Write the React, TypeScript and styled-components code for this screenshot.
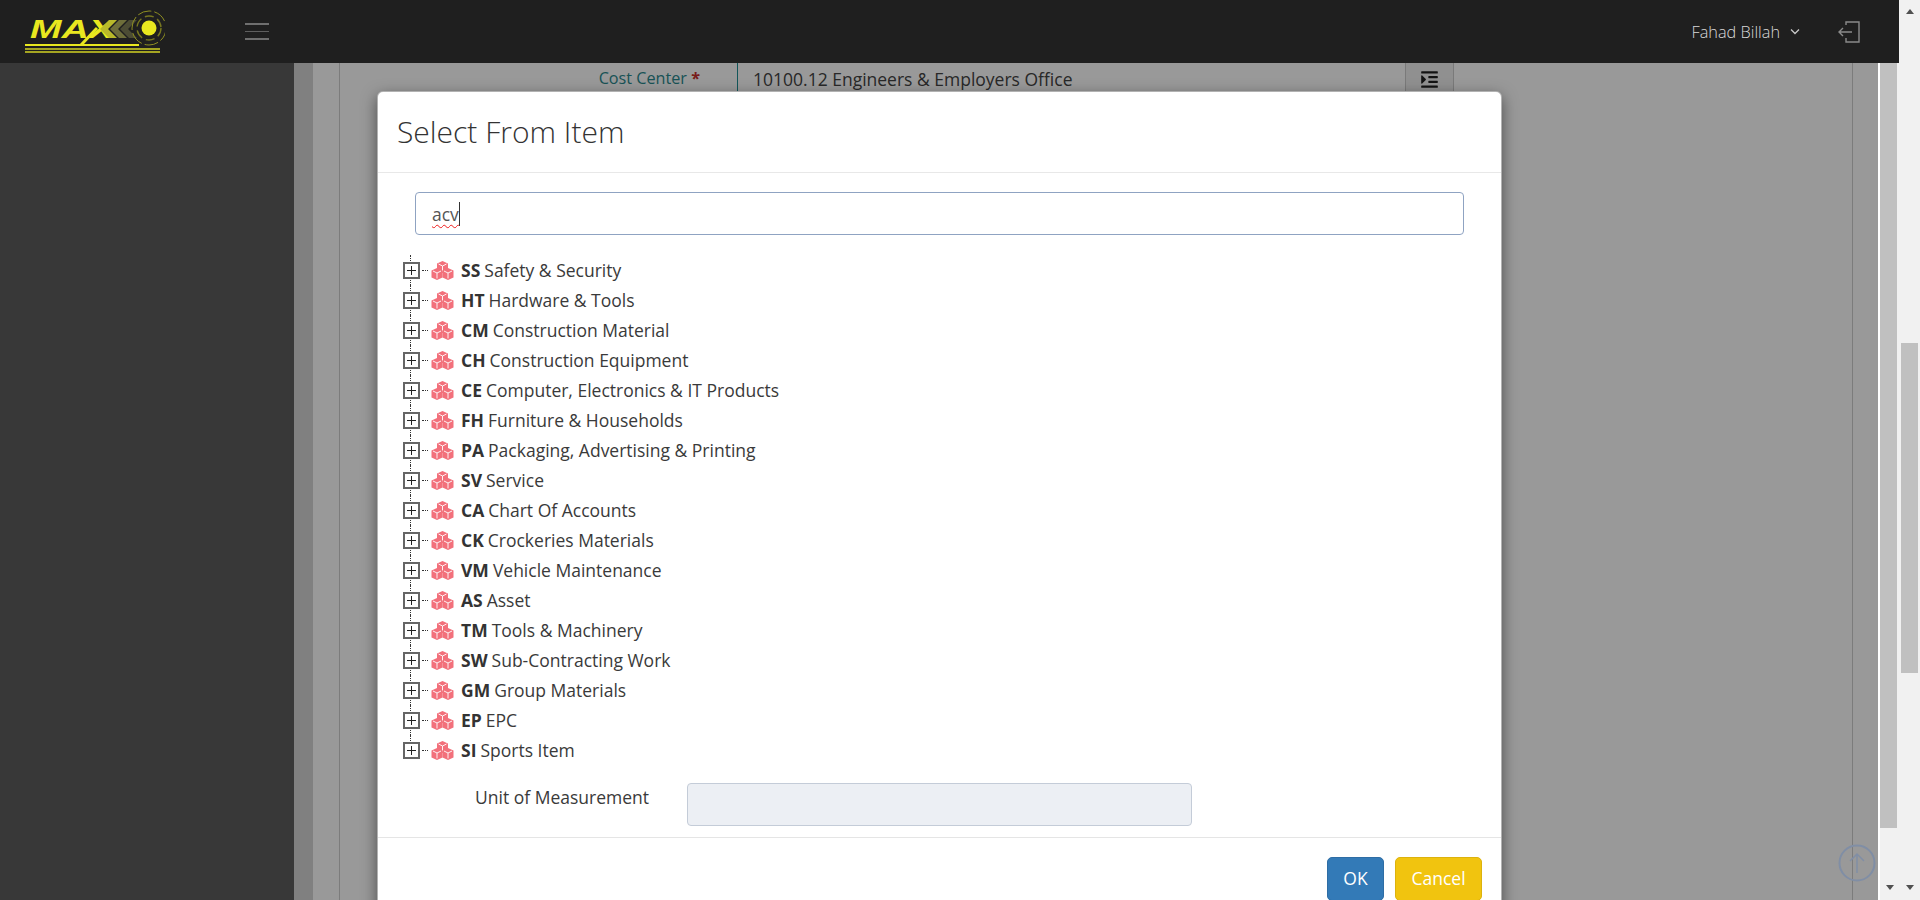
import styled, { createGlobalStyle } from "styled-components";
import { FaIndent } from "react-icons/fa";

const Global = createGlobalStyle`
  html, body { margin: 0; padding: 0; overflow: hidden; background: #f1f1f1; }
  * { box-sizing: border-box; }
  body { font-family: "Open Sans", "Liberation Sans", sans-serif; color: #333; }
`;

const Shell = styled.div`
  width: 1920px;
  height: 900px;
  display: flex;
  overflow: hidden;
`;
const Main = styled.div`
  width: 1899px;
  display: flex;
  flex-direction: column;
`;
const Header = styled.header`
  height: 63px;
  flex: none;
  background: #1f1f1f;
  display: flex;
  align-items: center;
  padding: 0 39px 0 25px;
`;
const Burger = styled.div`
  margin-left: 80px;
  width: 24px;
  display: flex;
  flex-direction: column;
  gap: 5px;
  margin-top: -1px;
  span { height: 2px; background: #6f6f6f; }
  span:nth-child(2) { height: 1px; margin-top: 1px; margin-bottom: 1px; background: #5f5f5f; }
`;
const Spacer = styled.div`
  flex: 1;
`;
const UserName = styled.div`
  font-size: 16.3px;
  font-weight: 300;
  color: #d8d8d8;
  margin-right: 10px;
`;
const LogoutWrap = styled.div`
  margin-left: 38px;
  display: flex;
`;
const Body = styled.div`
  flex: 1;
  display: flex;
  min-height: 0;
`;
const Sidebar = styled.aside`
  width: 294px;
  flex: none;
  background: #383838;
`;
const Content = styled.main`
  flex: 1;
  position: relative;
  overflow: hidden;
  background: #fff;
  padding-right: 2px;
`;
const Outer = styled.div`
  height: 100%;
  background: #fff;
  border-left: 19px solid #d6d6d6;
  padding-left: 26px;
  padding-right: 25px;
`;
const Panel = styled.div`
  height: 100%;
  border-left: 1px solid #cfcfcf;
  border-right: 1px solid #cfcfcf;
`;
const CostRow = styled.div`
  display: flex;
  height: 60px;
`;
const CostLabel = styled.div`
  width: 397px;
  text-align: right;
  padding: 4px 37px 0 0;
  font-size: 16.2px;
  color: #2b8a8f;
  em { color: #c9302c; font-style: normal; font-weight: 700; }
`;
const CostField = styled.div`
  width: 668px;
  border-left: 1px solid #1f8f97;
  padding: 4px 15px;
  font-size: 17.5px;
  color: #444;
`;
const CostBtn = styled.div`
  width: 49px;
  background: #f0f0f0;
  border-left: 1px solid #ccc;
  border-right: 1px solid #ccc;
  display: flex;
  justify-content: center;
  padding-top: 7px;
  color: #222;
`;
const Backdrop = styled.div`
  position: absolute;
  inset: 0 2px 0 0;
  background: rgba(0, 0, 0, 0.4);
`;
const Modal = styled.section`
  position: absolute;
  left: 83px;
  top: 28px;
  width: 1125px;
  height: 860px;
  background: #fff;
  border-radius: 6px;
  border: 1px solid rgba(0, 0, 0, 0.3);
  box-shadow: 0 5px 15px rgba(0, 0, 0, 0.5);
  display: flex;
  flex-direction: column;
`;
const ModalHead = styled.div`
  height: 81px;
  flex: none;
  border-bottom: 1px solid #e8e8e8;
  padding: 20px 19px 0;
`;
const Title = styled.h4`
  margin: 0;
  font-size: 30px;
  line-height: 40px;
  font-weight: 300;
  color: #333;
`;
const ModalBody = styled.div`
  height: 665px;
  flex: none;
  padding: 19px 37px 0 37px;
  border-bottom: 1px solid #e5e5e5;
`;
const SearchBox = styled.div`
  height: 43px;
  border: 1px solid #8fa3c2;
  border-radius: 4px;
  padding: 0 16px;
  display: flex;
  align-items: center;
  font-size: 17.5px;
  color: #555;
`;
const Misspelt = styled.span`
  text-decoration: underline wavy #ee1c1c 1px;
  text-underline-offset: 3px;
`;
const Caret = styled.i`
  width: 1px;
  height: 24px;
  background: #333;
`;
const Tree = styled.ul`
  list-style: none;
  margin: 20px 0 0 -12px;
  padding: 0;
`;
const TreeRow = styled.li`
  position: relative;
  height: 30px;
  display: flex;
  align-items: center;
  font-size: 17.5px;
  color: #3a3a3a;
  &::before {
    content: "";
    position: absolute;
    left: 7px;
    top: 0;
    height: 30px;
    border-left: 1px dotted #333;
  }
  &:last-child::before { height: 8px; }
`;
const Expander = styled.span`
  position: relative;
  z-index: 1;
  width: 17px;
  height: 17px;
  flex: none;
  background: #fff;
  border: 2px solid #666;
  display: flex;
  align-items: center;
  justify-content: center;
`;
const Dash = styled.span`
  width: 6px;
  margin: 0 3px 0 2px;
  flex: none;
  border-top: 1px dotted #333;
`;
const Code = styled.b`
  font-weight: 700;
  margin: 0 4px 0 7px;
  color: #333;
`;
const UnitRow = styled.div`
  display: flex;
  margin-top: 18px;
  padding-left: 60px;
`;
const UnitLabel = styled.label`
  width: 212px;
  padding-top: 2px;
  font-size: 17.5px;
  color: #3a3a3a;
`;
const UnitInput = styled.div`
  width: 505px;
  height: 43px;
  background: #eceff4;
  border: 1px solid #c4ccd8;
  border-radius: 4px;
`;
const ModalFoot = styled.div`
  flex: 1;
  display: flex;
  justify-content: flex-end;
  gap: 11px;
  padding: 19px 19px 0 0;
`;
const Btn = styled.button<{ $wide: number; $tone: "ok" | "cancel" }>`
  width: ${(p) => p.$wide}px;
  height: 44px;
  padding: 0 0 2px;
  border-radius: 5px;
  font: 400 17.5px "Open Sans", sans-serif;
  color: #fff;
  background: ${(p) => (p.$tone === "ok" ? "#337ab7" : "#f1c40f")};
  border: 1px solid ${(p) => (p.$tone === "ok" ? "#2e6da4" : "#dcb20e")};
`;
const ToTop = styled.div`
  position: absolute;
  right: 4px;
  bottom: 18px;
  display: flex;
`;
const InnerBar = styled.div`
  width: 19px;
  flex: none;
  background: #f1f1f1;
  display: flex;
  flex-direction: column;
`;
const InnerThumb = styled.div`
  width: 17px;
  height: 765px;
  background: #c0c0c0;
`;
const PageBar = styled.div`
  width: 21px;
  flex: none;
  background: #f1f1f1;
  display: flex;
  flex-direction: column;
  align-items: center;
  position: relative;
`;
const PageThumb = styled.div`
  width: 17px;
  height: 330px;
  background: #c0c0c0;
  margin-top: 325px;
`;
const Arrow = styled.i<{ $dir: "up" | "down" }>`
  display: block;
  width: 0;
  height: 0;
  border-left: 4.5px solid transparent;
  border-right: 4.5px solid transparent;
  ${(p) =>
    p.$dir === "up"
      ? "border-bottom: 5px solid #505050;"
      : "border-top: 5px solid #505050;"}
`;
const TopArrow = styled.div`
  height: 18px;
  padding-top: 9px;
`;
const BottomArrow = styled.div`
  margin-top: auto;
  height: 15px;
  align-self: center;
`;

const items: [string, string][] = [
  ["SS", "Safety & Security"],
  ["HT", "Hardware & Tools"],
  ["CM", "Construction Material"],
  ["CH", "Construction Equipment"],
  ["CE", "Computer, Electronics & IT Products"],
  ["FH", "Furniture & Households"],
  ["PA", "Packaging, Advertising & Printing"],
  ["SV", "Service"],
  ["CA", "Chart Of Accounts"],
  ["CK", "Crockeries Materials"],
  ["VM", "Vehicle Maintenance"],
  ["AS", "Asset"],
  ["TM", "Tools & Machinery"],
  ["SW", "Sub-Contracting Work"],
  ["GM", "Group Materials"],
  ["EP", "EPC"],
  ["SI", "Sports Item"],
];

function Logo() {
  const y = "#e9e81f";
  return (
    <svg width="140" height="50" viewBox="0 0 140 50" style={{ display: "block", marginTop: -2 }}>
      <text
        x="5"
        y="32"
        fontFamily="Liberation Sans, sans-serif"
        fontWeight="700"
        fontStyle="italic"
        fontSize="25"
        textLength="84"
        lengthAdjust="spacingAndGlyphs"
        fill={y}
      >
        MAX
      </text>
      <path d="M56 39 L72 22" stroke={y} strokeWidth="3" fill="none" />
      <path d="M84 14 L92 14 L83 23 L92 32 L84 32 L75 23Z" fill="#b9b92a" />
      <path d="M94 14 L102 14 L93 23 L102 32 L94 32 L85 23Z" fill="#6e6e3a" />
      <path d="M104 14 L112 14 L103 23 L112 32 L104 32 L95 23Z" fill="#4c4c34" />
      <circle cx="124" cy="22" r="17" fill="none" stroke="#8f8f22" strokeWidth="1" strokeDasharray="14 3" />
      <circle cx="124" cy="22" r="12" fill="none" stroke="#77771f" strokeWidth="1.4" strokeDasharray="9 4" />
      <circle cx="124" cy="22" r="7.5" fill={y} />
      <rect x="0" y="38" width="114" height="2" fill={y} />
      <rect x="0" y="42" width="135" height="2" fill="#a5a522" />
      <rect x="0" y="45" width="135" height="2" fill="#a5a522" />
    </svg>
  );
}

function Cubes() {
  const cube = (x: number, y: number) => (
    <g transform={`translate(${x} ${y})`}>
      <path d="M5.5 0 L11 2.4 L11 9.4 L5.5 12 L0 9.4 L0 2.4Z" fill="#f2707b" />
      <path d="M1.5 3 L5.5 5 L9.5 3 M5.5 5 L5.5 10.5" stroke="#fff" strokeWidth="0.9" fill="none" />
    </g>
  );
  return (
    <svg width="23" height="19" viewBox="0 0 23 19" style={{ flex: "none" }}>
      {cube(6, 0)}
      {cube(0.5, 7)}
      {cube(11.5, 7)}
    </svg>
  );
}

export default function App() {
  return (
    <>
      <Global />
      <Shell>
        <Main>
          <Header>
            <Logo />
            <Burger>
              <span />
              <span />
              <span />
            </Burger>
            <Spacer />
            <UserName>Fahad Billah</UserName>
            <svg width="10" height="7" viewBox="0 0 10 7">
              <path d="M1 1.5 L5 5.5 L9 1.5" stroke="#c8c8c8" strokeWidth="1.3" fill="none" />
            </svg>
            <LogoutWrap>
              <svg width="22" height="22" viewBox="0 0 22 22" fill="none" stroke="#8a8a8a" strokeWidth="1.4">
                <path d="M8 4 V1 H21 V21 H8 V17" />
                <path d="M14 11 H1 M5 7 L1 11 L5 15" />
              </svg>
            </LogoutWrap>
          </Header>
          <Body>
            <Sidebar />
            <Content>
              <Outer>
                <Panel>
                  <CostRow>
                    <CostLabel>
                      Cost Center <em>*</em>
                    </CostLabel>
                    <CostField>10100.12 Engineers &amp; Employers Office</CostField>
                    <CostBtn>
                      <FaIndent size={19} />
                    </CostBtn>
                  </CostRow>
                </Panel>
              </Outer>
              <Backdrop />
              <ToTop>
                <svg width="38" height="38" viewBox="0 0 38 38" fill="none" stroke="#808ea5" strokeWidth="2">
                  <circle cx="19" cy="19" r="17.5" />
                  <path d="M19 29 V10 M12 17 L19 10 L26 17" strokeWidth="1.5" />
                </svg>
              </ToTop>
              <Modal>
                <ModalHead>
                  <Title>Select From Item</Title>
                </ModalHead>
                <ModalBody>
                  <SearchBox>
                    <Misspelt>acv</Misspelt>
                    <Caret />
                  </SearchBox>
                  <Tree>
                    {items.map(([code, name]) => (
                      <TreeRow key={code}>
                        <Expander>
                          <svg width="9" height="9" viewBox="0 0 9 9">
                            <path d="M0 4.5 H9 M4.5 0 V9" stroke="#222" strokeWidth="1" />
                          </svg>
                        </Expander>
                        <Dash />
                        <Cubes />
                        <Code>{code}</Code>
                        {name}
                      </TreeRow>
                    ))}
                  </Tree>
                  <UnitRow>
                    <UnitLabel>Unit of Measurement</UnitLabel>
                    <UnitInput />
                  </UnitRow>
                </ModalBody>
                <ModalFoot>
                  <Btn $tone="ok" $wide={57}>OK</Btn>
                  <Btn $tone="cancel" $wide={87}>Cancel</Btn>
                </ModalFoot>
              </Modal>
            </Content>
            <InnerBar>
              <InnerThumb />
              <BottomArrow>
                <Arrow $dir="down" />
              </BottomArrow>
            </InnerBar>
          </Body>
        </Main>
        <PageBar>
          <TopArrow>
            <Arrow $dir="up" />
          </TopArrow>
          <PageThumb />
          <BottomArrow>
            <Arrow $dir="down" />
          </BottomArrow>
        </PageBar>
      </Shell>
    </>
  );
}
